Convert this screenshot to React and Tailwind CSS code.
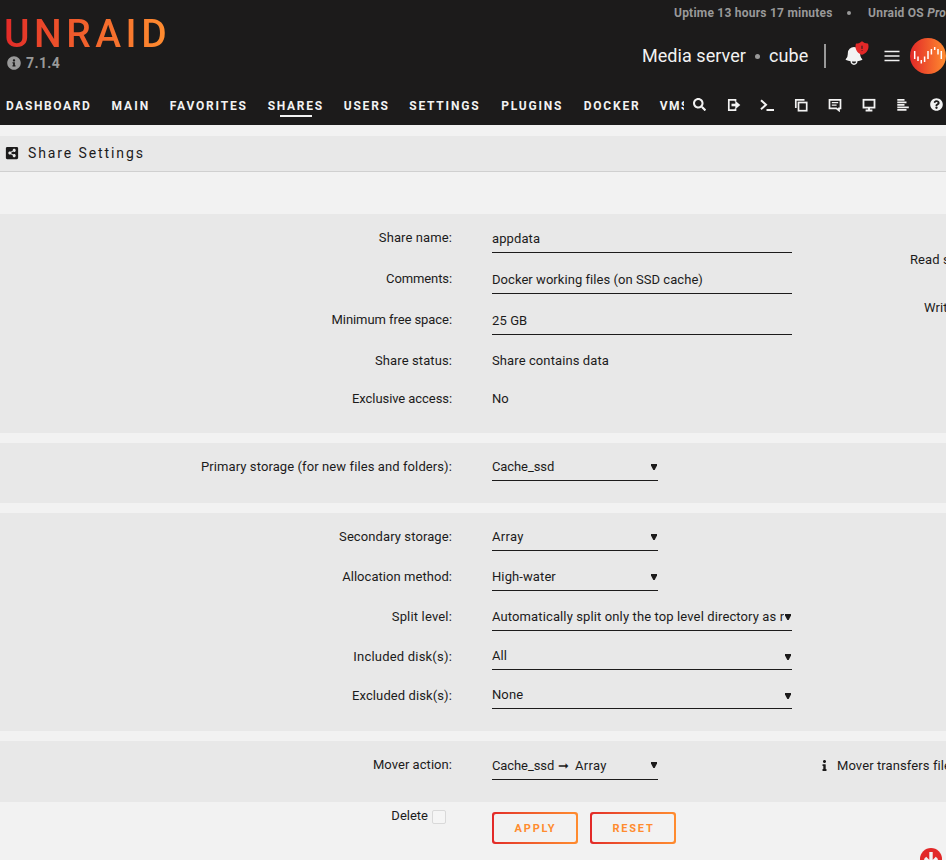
import { HiBell, HiShieldExclamation } from "react-icons/hi2";
import { FaSearch, FaQuestionCircle, FaShareAltSquare, FaInfoCircle, FaInfo } from "react-icons/fa";

const NAV = [
  ["DASHBOARD", "w-[105.5px] tracking-[1.6px]"],
  ["MAIN", "w-[58.2px] tracking-[2px]"],
  ["FAVORITES", "w-[98px] tracking-[1.8px]"],
  ["SHARES", "w-[76px] tracking-[1.7px]"],
  ["USERS", "w-[65.5px] tracking-[1.8px]"],
  ["SETTINGS", "w-[92px] tracking-[1.8px]"],
  ["PLUGINS", "w-[82.5px] tracking-[1.8px]"],
  ["DOCKER", "w-[76px] tracking-[1.8px]"],
  ["VMS", "w-[24.5px] tracking-[1.5px]"],
];

function Stroke({ children }) {
  return (
    <svg width="14" height="14" viewBox="0 0 14 14" fill="none" stroke="currentColor" strokeWidth="1.7">
      {children}
    </svg>
  );
}

const TOOLS = [
  <FaSearch size={13} />,
  <Stroke>
    <path d="M8.5 3.5V1.8H1.8V12.2H8.5V10.5" />
    <path d="M4.5 7H9" strokeWidth="2.6" />
    <path d="M8.3 2.8L13.3 7L8.3 11.2Z" fill="currentColor" stroke="none" />
  </Stroke>,
  <Stroke>
    <path d="M1 2.2L6 6.7L1 11.2" strokeWidth="2" />
    <path d="M6.5 12H14" strokeWidth="2" />
  </Stroke>,
  <Stroke>
    <path d="M1.8 10V1.8H10.5" />
    <rect x="4.5" y="4.5" width="8.2" height="8.2" />
  </Stroke>,
  <Stroke>
    <path d="M1.5 1.8H12.5V10.3H11V12.5L8.3 10.3H1.5Z" />
    <path d="M3.8 4.7H10.2M3.8 7.2H8.6" strokeWidth="1.3" />
  </Stroke>,
  <Stroke>
    <rect x="1.5" y="1.8" width="11" height="7.8" strokeWidth="1.8" />
    <path d="M7 9V12M3.6 12.4H10.4" strokeWidth="2" />
  </Stroke>,
  <Stroke>
    <path d="M1.3 1.9H8.5M1.3 4.4H10.5M1.3 6.9H8.5M1.3 9.4H12.8M1.3 11.9H10.5" strokeWidth="1.8" />
  </Stroke>,
  <FaQuestionCircle size={13} />,
];

function Row({ label, h, pt = "pt-[1px]", spacing = "", children }) {
  return (
    <div className={`flex ${h}`}>
      <div className={`w-[452px] shrink-0 text-right ${spacing}`}>{label}</div>
      <div className={`ml-10 shrink-0 ${pt}`}>{children}</div>
    </div>
  );
}

function Input({ children }) {
  return <div className="h-[24px] w-[300px] border-b border-[#1c1b1b]">{children}</div>;
}

function Select({ wide, clip, arrow = "mt-[6px]", h = "h-[24px]", children }) {
  return (
    <div className={`flex ${h} border-b border-[#1c1b1b] ${wide ? "w-[300px]" : "w-[166px]"}`}>
      <div className={`overflow-hidden whitespace-nowrap ${clip ? "w-[292px] shrink-0" : "flex-1"}`}>{children}</div>
      <svg width="6" height="7" viewBox="0 0 6 7" className={`ml-[1px] mr-[1px] shrink-0 ${arrow}`}>
        <path d="M0 1H6V2.5L3.7 7H2.3L0 2.5Z" fill="#1c1b1b" />
      </svg>
    </div>
  );
}

function Button({ children }) {
  return (
    <div className="h-8 w-[86px] rounded-[3px] bg-gradient-to-r from-[#e22828] to-[#ff8c2f] p-[2px]">
      <div className="flex h-full items-center justify-center rounded-[2px] bg-[#f2f2f2] pl-px pt-px text-[11px] font-bold tracking-[1.8px] text-[#ff8c2f]">
        {children}
      </div>
    </div>
  );
}

function Avatar() {
  return (
    <svg width="36" height="36" viewBox="0 0 36 36" className="shrink-0">
      <defs>
        <linearGradient id="brand" x1="0" x2="1" y1="0" y2="0">
          <stop offset="0" stopColor="#e22828" />
          <stop offset="1" stopColor="#ff8c2f" />
        </linearGradient>
      </defs>
      <circle cx="18" cy="18" r="18" fill="url(#brand)" />
      <path
        d="M4.7 13V21M8 18.5V23M11.3 22V25.5M14.6 18.5V24M18 13V21M21.4 11V16.5M24.7 9V12M28 11V16.5M31.3 13V21"
        stroke="#fff"
        strokeWidth="1.5"
      />
    </svg>
  );
}

function Header() {
  return (
    <header className="flex h-[125px] flex-col bg-[#1c1b1b] text-[#f2f2f2]">
      <div className="flex h-[86px] justify-between">
        <div className="pl-[4px] pt-[15px]">
          <div className="h-[38px] w-[163px] whitespace-nowrap bg-gradient-to-r from-[#e22828] to-[#ff8c2f] bg-clip-text text-[39px] font-medium leading-[38px] tracking-[4.5px] text-transparent">
            UNRAID
          </div>
          <div className="flex h-5 items-center gap-[5px] pl-[3px] text-[14px] font-bold leading-5 tracking-[0.4px] text-[#999]">
            <FaInfoCircle size={14} />
            <span>7.1.4</span>
          </div>
        </div>
        <div className="flex w-[310px] shrink-0 flex-col">
          <div className="flex h-[26px] items-center whitespace-nowrap pl-[38px] text-[12px] font-bold tracking-[0.23px] text-[#999]">
            <span className="w-[174px]">Uptime 13 hours 17 minutes</span>
            <span className="flex w-[22px] items-center pl-px">
              <span className="h-1 w-1 rounded-full bg-[#999]" />
            </span>
            <span className="shrink-0">
              Unraid OS <i>Pro</i>
            </span>
          </div>
          <div className="flex h-[60px] items-center whitespace-nowrap pl-[6px] text-[18px]">
            <span className="w-[113px] tracking-[0.05px]">Media server</span>
            <span className="flex w-[14px] shrink-0">
              <span className="h-[5px] w-[5px] rounded-full bg-[#999]" />
            </span>
            <span className="w-[55px] shrink-0 tracking-[0.1px]">cube</span>
            <span className="h-6 w-[2px] shrink-0 bg-[#999]" />
            <span className="relative ml-[17px] shrink-0">
              <HiBell size={22} />
              <HiShieldExclamation size={16} className="absolute -top-[5px] left-[11px] text-[#e22828]" />
            </span>
            <svg width="16" height="12" viewBox="0 0 16 12" className="ml-[19px] shrink-0">
              <path d="M0.5 1.5H15.5M0.5 6H15.5M0.5 10.5H15.5" stroke="#f2f2f2" strokeWidth="1.3" />
            </svg>
            <span className="ml-[10px] shrink-0">
              <Avatar />
            </span>
          </div>
        </div>
      </div>
      <div className="flex h-[39px]">
        <nav className="flex w-[684px] shrink-0 overflow-hidden whitespace-nowrap pl-[6px] pt-[12px] text-[12px] font-bold leading-4">
          {NAV.map(([name, w]) => (
            <div key={name} className={`shrink-0 ${w}`}>
              {name}
              {name === "SHARES" && <div className="ml-[12.3px] mt-px h-[2px] w-8 bg-[#f2f2f2]" />}
            </div>
          ))}
        </nav>
        <div className="-ml-px flex pt-[11.5px]">
          {TOOLS.map((icon, i) => (
            <span key={i} className="flex h-[14px] w-[33.8px] shrink-0 items-center justify-center">
              {icon}
            </span>
          ))}
        </div>
      </div>
    </header>
  );
}

export default function App() {
  return (
    <div className="h-[860px] w-[946px] overflow-hidden bg-[#f2f2f2] font-['Roboto','Liberation_Sans',sans-serif] text-[13px] leading-5 text-[#1c1b1b]">
      <Header />
      <div className="mt-[11px] flex h-9 items-center border-b border-[#d0d0d0] bg-[#e8e8e8] pb-px pl-[5px] text-[14px] tracking-[1.9px]">
        <FaShareAltSquare size={14} />
        <span className="ml-[9px]">Share Settings</span>
      </div>

      <section className="mt-[42px] flex h-[219px] bg-[#e8e8e8] pt-[14px] tracking-[0.1px]">
        <div className="w-[792px] shrink-0">
          <Row label="Share name:" h="h-[41px]"><Input>appdata</Input></Row>
          <Row label="Comments:" h="h-[41px]" spacing="tracking-[-0.1px]">
            <Input><span className="tracking-[0.05px]">Docker working files (on SSD cache)</span></Input>
          </Row>
          <Row label="Minimum free space:" h="h-[41px]" spacing="tracking-[-0.07px]"><Input>25 GB</Input></Row>
          <Row label="Share status:" h="h-[38px]" pt="pt-0">Share contains data</Row>
          <Row label="Exclusive access:" h="h-[38px]" pt="pt-0" spacing="tracking-[-0.07px]">No</Row>
        </div>
        <div className="overflow-hidden whitespace-nowrap pl-[118px] pt-[22px]">
          <div className="h-[48px]">Read settings from</div>
          <div className="pl-[14px]">Write settings to</div>
        </div>
      </section>

      <section className="mt-[10px] h-[60px] bg-[#e8e8e8] pt-[14px] tracking-[0.1px]">
        <Row label="Primary storage (for new files and folders):" h="h-[40px]" pt="pt-0">
          <Select><span className="tracking-[-0.1px]">Cache_ssd</span></Select>
        </Row>
      </section>

      <section className="mt-[10px] h-[218px] bg-[#e8e8e8] pt-[14px] tracking-[0.1px]">
        <Row label="Secondary storage:" h="h-[40px]" pt="pt-0"><Select><span className="tracking-[0.3px]">Array</span></Select></Row>
        <Row label="Allocation method:" h="h-[40px]" pt="pt-0" spacing="tracking-[0.05px]"><Select>High-water</Select></Row>
        <Row label="Split level:" h="h-[40px]" pt="pt-0" spacing="tracking-[0.17px]">
          <Select wide clip><span className="tracking-[0.12px]">Automatically split only the top level directory as required</span></Select>
        </Row>
        <Row label="Included disk(s):" h="h-[39px]" pt="pt-0" spacing="tracking-[0.2px]">
          <Select wide h="h-[23px]"><span className="relative -top-px">All</span></Select>
        </Row>
        <Row label="Excluded disk(s):" h="h-[39px]" pt="pt-0">
          <Select wide h="h-[23px]"><span className="relative -top-px">None</span></Select>
        </Row>
      </section>

      <section className="mt-[10px] flex h-[61px] bg-[#e8e8e8] pt-[14px] tracking-[0.1px]">
        <Row label="Mover action:" h="h-[40px]" spacing="tracking-[0.05px]">
          <Select arrow="mt-[5px]">
            <div className="flex">
              <span className="w-[66px] tracking-[-0.1px]">Cache_ssd</span>
              <span className="w-[17px]">➞</span>
              <span className="tracking-[0.3px]">Array</span>
            </div>
          </Select>
        </Row>
        <div className="ml-[161px] flex whitespace-nowrap pt-px">
          <FaInfo size={11} className="mt-[4px] w-[11px] shrink-0" />
          <span className="ml-[7px]">Mover transfers files from Primary to Secondary storage</span>
        </div>
      </section>

      <div className="flex h-[58px] overflow-hidden pt-[4px]">
        <div className="flex w-[447px] shrink-0 justify-end">
          <span>Delete</span>
          <span className="ml-[4px] mr-px mt-[4px] h-[14px] w-[14px] rounded-[2px] border border-[#d9d9d9] bg-[#f5f5f5]" />
        </div>
        <div className="ml-[45px] mt-[6px] flex gap-3">
          <Button>APPLY</Button>
          <Button>RESET</Button>
        </div>
        <svg width="22" height="22" viewBox="0 0 22 22" className="ml-[244px] mt-[42px] shrink-0">
          <circle cx="11" cy="11" r="11" fill="#e22828" />
          <path d="M11 4V17M5 10L11 16L17 10" stroke="#f2f2f2" strokeWidth="3.4" fill="none" />
        </svg>
      </div>
    </div>
  );
}
